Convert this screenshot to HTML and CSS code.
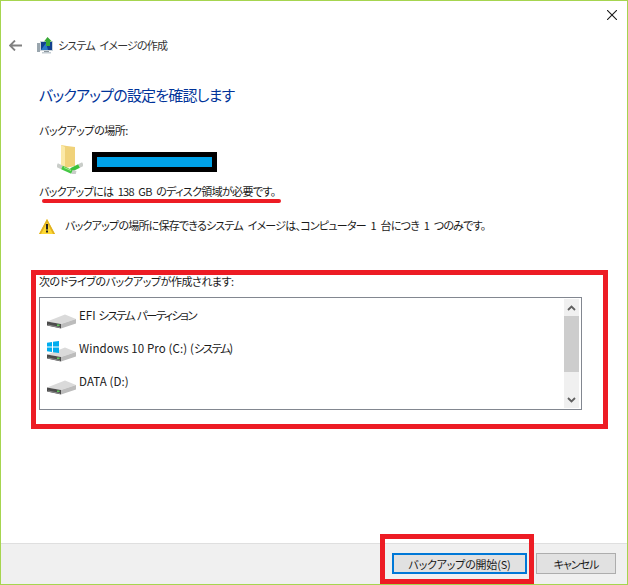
FILE: index.html
```html
<!DOCTYPE html>
<html lang="ja">
<head>
  <meta charset="UTF-8">
  <title>システム イメージの作成</title>
  <link rel="stylesheet" href="styles.css">
</head>
<body>
  <svg class="defs" width="0" height="0">
    <symbol id="drive" viewBox="0 0 29 15">
      <path d="M0 7.500 18 .5 29 5 14 10Z" fill="#dadada"/>
      <path d="M14 10 29 5 29 9.500 14 14.500Z" fill="#bcbcbc"/>
      <path d="M0 7.500 14 10 14 14.500 0 11.500Z" fill="#4c4c4c"/>
      <path d="M1 10.500 13 13 13 14 1 11.500Z" fill="#8e8e8e"/>
      <rect x="10" y="10.500" width="2.500" height="1.500" fill="#5fc85a"/>
    </symbol>
  </svg>

  <div class="window">
    <div class="main">
      <div class="topbar">
        <svg class="close" width="10" height="10" viewBox="0 0 10 10"><path d="M0 0 10 10M10 0 0 10" stroke="#1a1a1a" stroke-width="1.100" fill="none"/></svg>
      </div>

      <div class="nav">
        <svg class="back" width="13" height="11" viewBox="0 0 13 11"><path d="M6 .5 1 5.500 6 10.500M1 5.500H13" stroke="#808080" stroke-width="1.800" fill="none"/></svg>
        <svg class="nav-icon" width="17" height="17" viewBox="0 0 17 17">
          <rect x="0" y="6" width="3" height="9" fill="#9aa6ae"/>
          <rect x="3" y="4" width="13" height="10" fill="#c9d3da"/>
          <rect x="4" y="5" width="11" height="8" fill="#12408f"/>
          <path d="M4 13 9 6 11 13Z" fill="#2a78c8"/>
          <rect x="7" y="14" width="5" height="1" fill="#8d979e"/>
          <rect x="5" y="15" width="9" height="1.500" fill="#c3ccd2"/>
          <path d="M10.500 0 15 4.500H13V9H9V4.500H7Z" fill="#39a935"/>
        </svg>
        <span class="nav-title">システム イメージの作成</span>
      </div>

      <h1 class="heading">バックアップの設定を確認します</h1>

      <p class="label place-label">バックアップの場所:</p>

      <div class="location">
        <svg class="folder" width="26" height="29" viewBox="0 0 26 29">
          <path d="M4 0 10 1 18 2V21L4 24Z" fill="#f0d27a"/>
          <path d="M4 0 8 2V25L4 22Z" fill="#fbe9a8"/>
          <g fill="none" stroke-width="4">
            <path d="M0 20 5 22.500" stroke="#c9cdc9"/>
            <path d="M22 21 26 19" stroke="#c9cdc9"/>
            <path d="M14 25 22 21" stroke="#3cc13c"/>
            <path d="M5 22.500 15 27" stroke="#45c845"/>
            <path d="M15 27 19 28" stroke="#c9cdc9"/>
          </g>
          <path d="M7 22.500 14 25.500" stroke="#a5ea86" fill="none"/>
        </svg>
        <div class="redacted"><div class="redacted-fill"></div></div>
      </div>

      <p class="label need">バックアップには 138 GB のディスク領域が必要です。</p>

      <div class="notice">
        <svg class="warn" width="16" height="15" viewBox="0 0 16 15"><path d="M8 0 16 15H0Z" fill="#fdd835"/><path d="M8 0 16 15H14L8 3.500 2 15H0Z" fill="#e0b020"/><rect x="7" y="5" width="2" height="5.500" fill="#222"/><rect x="7" y="11.500" width="2" height="2" fill="#222"/></svg>
        <span class="notice-text">バックアップの場所に保存できるシステム イメージは、コンピューター 1 台につき 1 つのみです。</span>
      </div>

      <p class="label list-label">次のドライブのバックアップが作成されます:</p>

      <div class="listbox">
        <div class="rows">
          <div class="row">
            <svg class="drive" width="29" height="15"><use href="#drive"/></svg>
            <span>EFI <span class="kana">システム パーティション</span></span>
          </div>
          <div class="row">
            <div class="drive-wrap">
              <svg class="drive" width="29" height="15"><use href="#drive"/></svg>
              <svg class="winlogo" width="12" height="12" viewBox="0 0 12 12"><path d="M0 1.700 5 1V5.600H0ZM6 .8 12 0V5.600H6ZM0 6.400H5V11L0 10.300ZM6 6.400H12V12L6 11.200Z" fill="#00adef"/></svg>
            </div>
            <span>Windows 10 Pro (C:) (<span class="kana">システム</span>)</span>
          </div>
          <div class="row">
            <svg class="drive" width="29" height="15"><use href="#drive"/></svg>
            <span>DATA (D:)</span>
          </div>
        </div>
        <div class="scrollbar">
          <div class="scroll-btn"><svg width="9" height="6" viewBox="0 0 9 6"><path d="M1 5 4.500 1.500 8 5" stroke="#606060" stroke-width="1.800" fill="none"/></svg></div>
          <div class="scroll-track"><div class="scroll-thumb"></div></div>
          <div class="scroll-btn"><svg width="9" height="6" viewBox="0 0 9 6"><path d="M1 1 4.500 4.500 8 1" stroke="#606060" stroke-width="1.800" fill="none"/></svg></div>
        </div>
      </div>
    </div>

    <div class="footer">
      <button class="btn btn-primary">バックアップの開始(S)</button>
      <button class="btn btn-cancel">キャンセル</button>
    </div>

    <!-- annotations drawn over the screenshot -->
    <div class="mark mark-underline"></div>
    <div class="mark mark-list"></div>
    <div class="mark mark-button"></div>
  </div>
</body>
</html>
```

FILE: styles.css
```css
* {
  margin: 0;
  padding: 0;
  box-sizing: border-box;
}

body {
  background: #fff;
  font-family: "Noto Sans CJK JP", "Liberation Sans", sans-serif;
  font-size: 11px;
  letter-spacing: -0.47px;
  font-feature-settings: "palt";
  color: #1a1a1a;
}

.defs {
  position: absolute;
}

.window {
  position: relative;
  width: 628px;
  height: 585px;
  display: flex;
  flex-direction: column;
  background: #fff;
  border: 1px solid #a6d54f;
}

.main {
  flex: 1;
  padding: 0 0 0 38px;
}

.topbar {
  height: 34px;
  display: flex;
  justify-content: flex-end;
  padding: 9px 10px 0 0;
}

.nav {
  height: 20px;
  display: flex;
  align-items: center;
  margin-left: -30px;
}

.back {
  margin-right: 15px;
}

.nav-icon {
  margin-right: 4px;
}

.nav-title {
  color: #333;
  letter-spacing: -0.8px;
  word-spacing: 3px;
}

.heading {
  margin-top: 29px;
  font-size: 15px;
  font-weight: 400;
  letter-spacing: -0.8px;
  line-height: 22px;
  color: #003399;
}

.label {
  line-height: 18px;
}

.place-label {
  margin-top: 15px;
}

.location {
  display: flex;
  align-items: flex-start;
  height: 35px;
  margin-top: 6px;
  padding-left: 18px;
}

.folder {
  margin-right: 9px;
}

.redacted {
  width: 125px;
  height: 20px;
  margin-top: 7px;
  padding: 5px;
  background: #000;
}

.redacted-fill {
  height: 100%;
  background: #00a2e8;
}

.need {
  margin-top: 2px;
  letter-spacing: -0.65px;
  word-spacing: 2.5px;
}

.notice {
  display: flex;
  align-items: center;
  gap: 10px;
  height: 18px;
  margin-top: 16px;
}

.notice-text {
  letter-spacing: -0.77px;
  word-spacing: 3px;
}

.warn {
  margin-top: 3px;
}

.list-label {
  margin-top: 38px;
}

.listbox {
  display: flex;
  justify-content: space-between;
  width: 543px;
  height: 113px;
  margin-top: 7px;
  padding: 1px 2px 1px 0;
  border: 1px solid #828790;
}

.rows {
  padding: 7px 0 0 7px;
}

.row {
  display: flex;
  align-items: flex-start;
  gap: 3px;
  height: 33px;
  font-size: 11.5px;
  letter-spacing: 0.1px;
  line-height: 18px;
}

.kana {
  letter-spacing: -1.6px;
  word-spacing: 2px;
}

.drive {
  display: block;
  margin-top: 8px;
}

.drive-wrap {
  position: relative;
}

.winlogo {
  position: absolute;
  left: 0;
  top: 2px;
}

.scrollbar {
  width: 15px;
  display: flex;
  flex-direction: column;
  background: #f0f0f0;
}

.scroll-btn {
  height: 17px;
  display: flex;
  align-items: center;
  justify-content: center;
}

.scroll-track {
  flex: 1;
}

.scroll-thumb {
  height: 56px;
  background: #cdcdcd;
}

.footer {
  height: 41px;
  display: flex;
  justify-content: flex-end;
  gap: 9px;
  padding: 9px 11px 0 0;
  background: #f0f0f0;
  border-top: 1px solid #dfdfdf;
}

.btn {
  height: 21px;
  width: 80px;
  font: inherit;
  font-feature-settings: "palt";
  letter-spacing: -0.2px;
  color: #1a1a1a;
  background: #e1e1e1;
  border: 1px solid #adadad;
}

.btn-primary {
  width: 135px;
  border: 2px solid #0078d7;
}

.btn-cancel {
  letter-spacing: -1px;
}

.mark {
  position: absolute;
}

.mark-underline {
  left: 41px;
  top: 198px;
  width: 239px;
  height: 4px;
  border-radius: 2px;
  background: #ed1c24;
}

.mark-list {
  left: 30px;
  top: 269px;
  width: 577px;
  height: 159px;
  border: 5px solid #ed1c24;
}

.mark-button {
  left: 379px;
  top: 533px;
  width: 154px;
  height: 50px;
  border: 5px solid #ed1c24;
}
```
